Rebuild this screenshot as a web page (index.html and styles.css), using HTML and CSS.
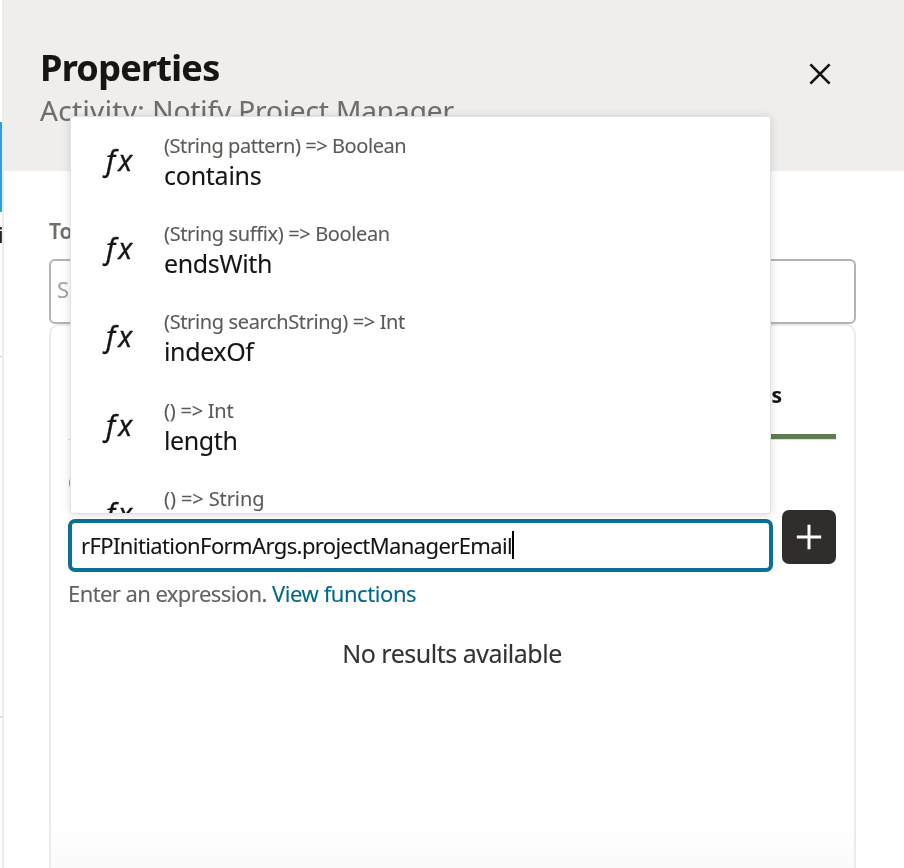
FILE: index.html
```html
<!DOCTYPE html>
<html lang="en">
<head>
<meta charset="utf-8">
<title>Properties</title>
<link rel="stylesheet" href="styles.css">
</head>
<body>
<div class="app">
  <aside class="canvas-edge">
    <div class="edge-top"></div>
    <div class="edge-selected"></div>
    <div class="edge-label"><span>i</span></div>
    <div class="edge-block"></div>
    <div class="edge-rest"></div>
  </aside>
  <main class="panel">
    <header class="header">
      <div>
        <h1 class="title">Properties</h1>
        <p class="subtitle"><span class="kind">Activity:</span> Notify Project Manager</p>
      </div>
      <button class="close" aria-label="Close">
        <svg width="22" height="22" viewBox="0 0 22 22"><path d="M1.4 1.4 20.6 20.6M20.6 1.4 1.4 20.6"/></svg>
      </button>
    </header>
    <section class="body">
      <div class="field-label">To</div>
      <div class="select">S</div>
      <div class="card">
        <div class="tabs"><span class="tab">s</span></div>
        <div class="tabline"><i></i></div>
        <div class="section-label">C</div>
        <div class="row">
          <div class="combo">
            <div class="expr"><span>rFPInitiationFormArgs.projectManagerEmail</span><i class="caret"></i></div>
            <ul class="menu">
              <li class="item"><span class="fx">fx</span><div><div class="sig s1">(String pattern) =&gt; Boolean</div><div class="name n1">contains</div></div></li>
              <li class="item"><span class="fx">fx</span><div><div class="sig">(String suffix) =&gt; Boolean</div><div class="name">endsWith</div></div></li>
              <li class="item"><span class="fx">fx</span><div><div class="sig">(String searchString) =&gt; Int</div><div class="name">indexOf</div></div></li>
              <li class="item"><span class="fx">fx</span><div><div class="sig s4">() =&gt; Int</div><div class="name">length</div></div></li>
              <li class="item"><span class="fx">fx</span><div><div class="sig s5">() =&gt; String</div></div></li>
            </ul>
          </div>
          <button class="add" aria-label="Add">
            <svg width="26" height="26" viewBox="0 0 26 26"><path d="M13 .8V25.2M.8 13H25.2"/></svg>
          </button>
        </div>
        <div class="help">Enter an expression. <a class="link">View functions</a></div>
        <div class="empty">No results available</div>
      </div>
    </section>
  </main>
</div>
</body>
</html>
```

FILE: styles.css
```css
* { box-sizing: border-box; }
body {
  margin: 0;
  overflow: hidden;
  background: #fff;
  color: #161513;
  font-family: "Noto Sans", "Open Sans", sans-serif;
}
h1, p, ul { margin: 0; padding: 0; }
button { border: 0; padding: 0; background: none; }
.app {
  display: flex;
  width: 904px;
  height: 868px;
  overflow: hidden;
  will-change: transform;
  -webkit-text-stroke: .1px currentColor;
}

.canvas-edge {
  width: 4px;
  height: 868px;
  border-right: 2px solid #ececec;
  overflow: hidden;
  flex: none;
}
.edge-top { height: 122px; }
.edge-selected { height: 90px; background: #2f9fdb; }
.edge-label { height: 145px; border-bottom: 1px solid #c8c8c8; padding-top: 7px; font-size: 22px; line-height: 30px; color: #222; }
.edge-label span { margin-left: -2px; }
.edge-block { height: 361px; border-bottom: 2px solid #ddd; }

.panel { flex: 1; display: flex; flex-direction: column; }
.header {
  height: 171px;
  flex: none;
  display: flex;
  justify-content: space-between;
  padding: 44px 73px 0 36px;
  background: #efeeec;
}
.title { font-size: 36px; line-height: 48px; font-weight: 700; letter-spacing: -.7px; }
.subtitle { font-size: 28px; line-height: 36px; color: #706e6b; white-space: nowrap; letter-spacing: -.12px; }
.kind { letter-spacing: .35px; }
.close { height: 22px; margin-top: 19px; }
.close svg, .add svg { display: block; fill: none; }
.close path { stroke: #161513; stroke-width: 2.7; }

.body { flex: 1; display: flex; flex-direction: column; padding: 45px 48px 0 45px; }
.field-label { height: 43px; font-size: 21px; line-height: 30px; font-weight: 600; color: #706e6b; }
.select {
  height: 65px;
  flex: none;
  border: 2px solid #b4b3b1;
  border-radius: 6px;
  padding: 0 6px;
  font-size: 22px;
  line-height: 56px;
  color: #a5a4a2;
}
.card {
  flex: 1;
  border: 2px solid #ebebeb;
  border-bottom: 0;
  border-radius: 10px 10px 0 0;
  padding: 52px 18px 0 17px;
  background: linear-gradient(#fff 500px, #fafafa 543px);
}
.tabs { height: 56px; text-align: right; padding-right: 54px; font-size: 21px; line-height: 34px; font-weight: 700; }
.tabline { height: 6px; display: flex; justify-content: flex-end; border-bottom: 1px solid #ddd; }
.tabline i { width: 130px; height: 5px; background: #5f7d4f; }
.section-label { height: 70px; padding-top: 26px; font-size: 21px; line-height: 34px; color: #706e6b; }
.row { display: flex; justify-content: space-between; }
.combo { position: relative; width: 705px; padding-top: 9px; }
.expr {
  height: 53px;
  border: 4px solid #0b7096;
  border-radius: 7px;
  padding: 0 0 1px 9px;
  display: flex;
  align-items: center;
  background: #fff;
  font-size: 22px;
  letter-spacing: -.61px;
  white-space: nowrap;
}
.caret { width: 2px; height: 28px; background: #000; }
.menu {
  position: absolute;
  left: 2px;
  bottom: 58px;
  width: 701px;
  height: 398px;
  overflow: hidden;
  list-style: none;
  background: #fff;
  border: 1px solid #e2e2e2;
  border-radius: 3px;
  box-shadow: 0 1px 8px rgba(0, 0, 0, .14);
}
.item { display: flex; height: 88.2px; padding: 14px 0 0 34px; white-space: nowrap; }
.fx {
  width: 59px;
  padding: 10px 0 0 1px;
  font-size: 29px;
  line-height: 38px;
  font-style: italic;
  letter-spacing: 3px;
  -webkit-text-stroke-width: .3px;
}
.sig { font-size: 20px; line-height: 30px; letter-spacing: -.37px; color: #5c5a57; }
.s1 { letter-spacing: -.43px; }
.s4 { letter-spacing: -.25px; }
.s5 { letter-spacing: -.1px; }
.name { margin-top: -1px; font-size: 25px; line-height: 30px; letter-spacing: -.38px; }
.n1 { letter-spacing: -.25px; }
.add {
  width: 54px;
  height: 54px;
  border-radius: 7px;
  background: #312d2a;
  display: grid;
  place-items: center;
}
.add path { stroke: #fff; stroke-width: 3; }
.help { margin-top: 6px; font-size: 22px; line-height: 30px; letter-spacing: -.58px; color: #64625f; white-space: nowrap; }
.link { color: #00688c; letter-spacing: -.43px; }
.empty { margin-top: 28px; text-align: center; font-size: 25px; line-height: 34px; letter-spacing: -.5px; color: #333; }
```
